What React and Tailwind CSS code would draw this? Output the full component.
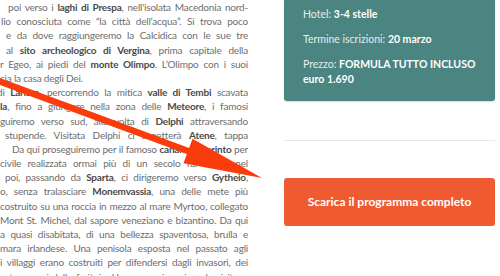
const lines = [
  { x: 8, parts: ['poi verso i ', ['laghi di Prespa'], ", nell'isolata Macedonia nord-"] },
  { x: 1, parts: ['lio conosciuta come “la città dell’acqua”. Si trova poco'] },
  { x: 6, parts: ['e da dove raggiungeremo la Calcidica con le sue tre'] },
  { x: 6, parts: ['al ', ['sito archeologico di Vergina'], ', prima capitale della'] },
  { x: 0, parts: ['r Egeo, ai piedi del ', ['monte Olimpo'], '. L’Olimpo con i suoi'] },
  { x: 0, last: true, parts: ['cia la casa degli Dei.'] },
  { x: -3, parts: ['di ', ['Larissa'], ', percorrendo la mitica ', ['valle di Tembi'], ' scavata'] },
  { x: 0, parts: [['la'], ', fino a giungere nella zona delle ', ['Meteore'], ', i famosi'] },
  { x: 0, parts: ['guiremo verso sud, alla volta di ', ['Delphi'], ' attraversando'] },
  { x: 5, parts: ['stupende. Visitata Delphi ci aspetterà ', ['Atene'], ', tappa'] },
  { x: 12, parts: ['Da qui proseguiremo per il famoso ', ['canale di Corinto'], ' per'] },
  { x: 0, parts: ['civile realizzata ormai più di un secolo fa. Giunti nel'] },
  { x: 5, parts: ['poi, passando da ', ['Sparta'], ', ci dirigeremo verso ', ['Gytheio'], ','] },
  { x: 0, parts: ['o, senza tralasciare ', ['Monemvassia'], ', una delle mete più'] },
  { x: 0, parts: ['costruito su una roccia in mezzo al mare Myrtoo, collegato'] },
  { x: 0, parts: ['Mont St. Michel, dal sapore veneziano e bizantino. Da qui'] },
  { x: 0, parts: ['a quasi disabitata, di una bellezza spaventosa, brulla e'] },
  { x: 0, parts: ['mara irlandese. Una penisola esposta nel passato agli'] },
  { x: 0, parts: ['i villaggi erano costruiti per difendersi dagli invasori, dei'] },
  { x: 0, parts: ['estre, quasi delle feritoie. Un paesaggio unico, da visitare.'] },
];

function Line({ line }) {
  return (
    <div
      className={
        'whitespace-nowrap h-[14.2px] leading-[14.2px] tracking-[-0.2px] ' +
        (line.last ? 'text-left' : 'text-justify [text-align-last:justify]')
      }
      style={{ marginLeft: line.x }}
    >
      {line.parts.map((p, i) =>
        Array.isArray(p) ? (
          <strong key={i} className="font-bold text-[#4a4a4a]">{p[0]}</strong>
        ) : (
          <span key={i}>{p}</span>
        )
      )}
    </div>
  );
}

export default function App() {
  return (
    <div className="relative w-[500px] h-[276px] overflow-hidden bg-white font-['Lato',sans-serif]">
      <div className="flex">
        <div className="w-[248px] shrink-0 overflow-hidden text-[10px] text-[#6e6e6e]">
          {lines.map((l, i) => (
            <Line key={i} line={l} />
          ))}
        </div>

        <div className="ml-[36px] w-[211px] shrink-0 flex flex-col">
          <div className="bg-[#4b8581] rounded-b-[3px] shadow-[0_1px_2px_rgba(0,0,0,0.15)] pt-[7px] pb-[14px] px-[19px] text-[10.5px] leading-[15px] text-[#e3eeed]">
            <p>Hotel: <strong className="font-bold text-white">3-4 stelle</strong></p>
            <p className="mt-[10px]">Termine iscrizioni: <strong className="font-bold text-white">20 marzo</strong></p>
            <p className="mt-[10px]">
              Prezzo: <strong className="font-bold text-white">FORMULA TUTTO INCLUSO</strong>
              <br />
              <strong className="font-bold text-white">euro 1.690</strong>
            </p>
          </div>

          <div className="mt-[39px] h-px bg-[#e8e8e8]" />

          <button className="mt-[37px] h-[48px] w-full rounded-[3px] bg-[#f05a30] text-white font-bold text-[12px]">
            Scarica il programma completo
          </button>
        </div>
      </div>

      <svg className="absolute inset-0 pointer-events-none" width="500" height="276" viewBox="0 0 500 276">
        <line x1="-5" y1="79.6" x2="190" y2="151.7" stroke="#fa3c0c" strokeWidth="6.5" />
        <polygon points="183.5,163.2 192.5,138.8 262,178" fill="#fa3c0c" />
      </svg>
    </div>
  );
}
